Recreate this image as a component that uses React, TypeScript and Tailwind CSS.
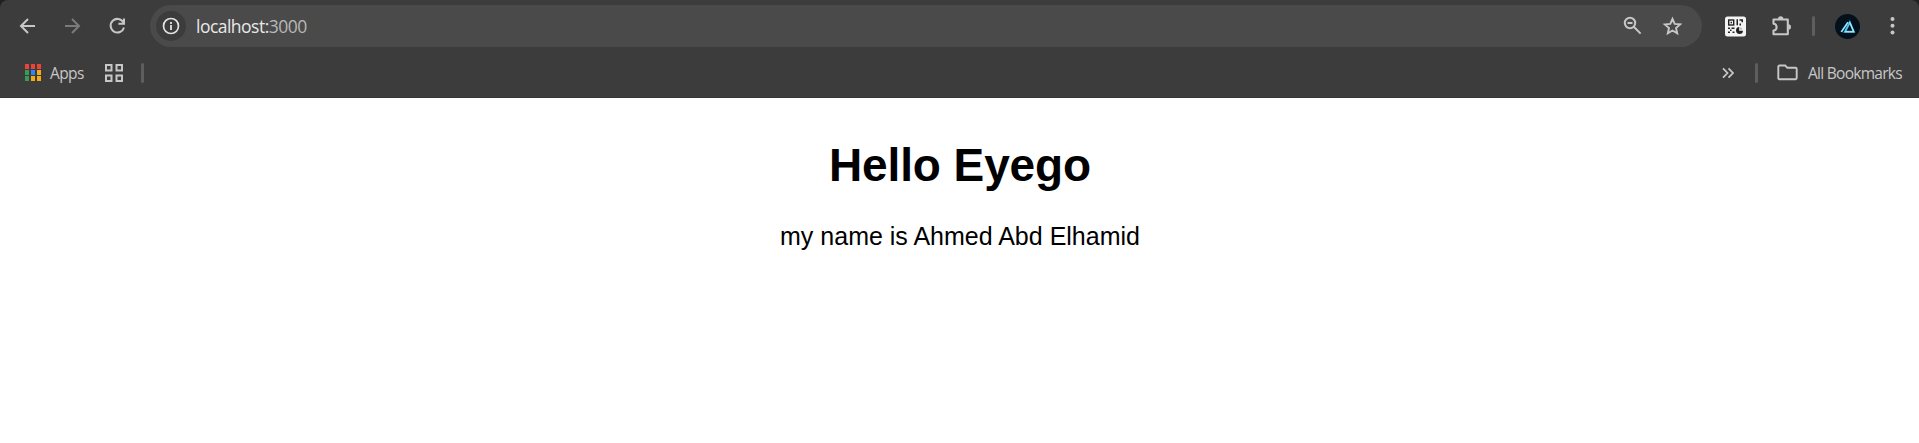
import type { ReactNode } from "react";

function Icon({ w, h, className = "", children }: { w: number; h: number; className?: string; children: ReactNode }) {
  return (
    <svg width={w} height={h} viewBox={`0 0 ${w} ${h}`} fill="none" className={`block shrink-0 ${className}`}>
      {children}
    </svg>
  );
}

function Divider({ className = "" }: { className?: string }) {
  return <div className={`h-5 w-[3px] shrink-0 rounded-full bg-[#5e5e5e] ${className}`} />;
}

function Toolbar() {
  return (
    <div className="flex h-[52px] items-center pl-[15px] text-[#c7c7c7]">
      <Icon w={25} h={25}>
        <path d="M20 12H6.5M13 5l-7 7 7 7" stroke="currentColor" strokeWidth="2" />
      </Icon>
      <Icon w={25} h={25} className="ml-5 text-[#7b7b7b]">
        <path d="M5 12h13.5M12 5l7 7-7 7" stroke="currentColor" strokeWidth="2" />
      </Icon>
      <Icon w={25} h={25} className="ml-5">
        <path d="M18.4 8.4A6.8 6.8 0 1 0 19 13.5" stroke="currentColor" strokeWidth="2" />
        <path d="M19 4.5v5.2h-5.6" stroke="currentColor" strokeWidth="2" />
      </Icon>

      <div className="ml-5 flex h-[42px] w-[1552px] items-center rounded-full bg-[#4a4a4a] pl-[6px]">
        <div className="flex size-[30px] items-center justify-center rounded-full bg-[#3c3c3c] text-[#e3e3e3]">
          <Icon w={18} h={18}>
            <circle cx="9" cy="9" r="7.5" stroke="currentColor" strokeWidth="1.7" />
            <path d="M9 8v5M9 5v2" stroke="currentColor" strokeWidth="1.8" />
          </Icon>
        </div>
        <div className="ml-[10px] pb-px font-['Open_Sans','Noto_Sans',sans-serif] text-[17.5px] leading-6 tracking-[-0.52px] text-[#e8e8e8]">
          localhost:<span className="text-[#b8b8b8]">3000</span>
        </div>
        <Icon w={20} h={20} className="ml-auto">
          <circle cx="7" cy="7" r="5.2" stroke="currentColor" strokeWidth="2" />
          <path d="M4.5 7h5M10.8 10.8l6.8 6.8" stroke="currentColor" strokeWidth="2" />
        </Icon>
        <Icon w={20} h={20} className="mr-5 ml-[19px]">
          <path
            d="M10.5 2.9l2.2 5 5.4.5-4.1 3.6 1.2 5.3-4.7-2.8-4.7 2.8L7 12 2.9 8.4l5.4-.5z"
            stroke="currentColor"
            strokeWidth="1.9"
          />
        </Icon>
      </div>

      <Icon w={21} h={21} className="ml-[23px]">
        <rect x="0" y="0.5" width="21" height="20" rx="2.5" fill="#f4f4f4" />
        <rect x="3.7" y="4" width="5" height="5" stroke="#222" strokeWidth="1.4" />
        <rect x="5.5" y="5.8" width="1.5" height="1.5" fill="#222" />
        <path
          d="M11.5 3.3H13v6h-1.5zM14.5 3.3H18v3h-1.5V4.7h-2zM14.5 7.5H16v2h-1.5zM3 11.5h2V13H3zM6.5 11.5h3V13h-3zM5 13.5h1.5V15H5zM3 15.5h2V17H3zM7.5 15.5h2V17h-2z"
          fill="#222"
        />
        <path d="M14.2 11a3.5 3.5 0 1 0 3.8 3.7h-3.8z" fill="#222" />
        <path d="M15.4 11.2l2 2.1h-2z" fill="#222" opacity="0.5" />
      </Icon>
      <Icon w={23} h={23} className="ml-6">
        <path
          d="M3.5 4.5h14.3v14.7H3.5v-3.6c2 0 3.1-1.5 3.1-3.4S5.5 8.7 3.5 8.7z"
          stroke="currentColor"
          strokeWidth="2.1"
          strokeLinejoin="round"
        />
        <path d="M8 4a2.7 2.7 0 0 1 5.4 0zM18.3 9.3a2.7 2.7 0 0 1 0 5.4z" fill="currentColor" />
      </Icon>
      <Divider className="ml-[19px]" />
      <Icon w={25} h={25} className="ml-5">
        <circle cx="12.5" cy="12.5" r="12.5" fill="#04111a" />
        <path d="M6.3 18L13 8.2" stroke="#4cc4ee" strokeWidth="2" />
        <path d="M10 17.8h8.8L14.8 8.4z" stroke="#4cc4ee" strokeWidth="2" />
        <path d="M6.3 18L13 8.2M10 17.8h8.8L14.8 8.4" stroke="#d4f8ff" strokeWidth="0.8" />
      </Icon>
      <Icon w={5} h={20} className="ml-[30px]">
        <circle cx="2.5" cy="3" r="2" fill="currentColor" />
        <circle cx="2.5" cy="9.7" r="2" fill="currentColor" />
        <circle cx="2.5" cy="16.5" r="2" fill="currentColor" />
      </Icon>
    </div>
  );
}

const appColors = [
  "bg-[#ee4238]", "bg-[#ee4238]", "bg-[#ee4238]",
  "bg-[#349c55]", "bg-[#2d86f3]", "bg-[#f5ab13]",
  "bg-[#349c55]", "bg-[#f5ab13]", "bg-[#f5ab13]",
];

function BookmarksBar() {
  return (
    <div className="flex h-[41px] items-center pr-[18px] pl-[25px] font-['Open_Sans','Noto_Sans',sans-serif] text-[15.5px] leading-5 text-[#c7c7c7]">
      <div className="grid grid-cols-[repeat(3,4px)] gap-x-[2px] gap-y-px">
        {appColors.map((color, i) => (
          <div key={i} className={`h-[5px] w-1 ${color}`} />
        ))}
      </div>
      <span className="ml-[9px] w-[34px] tracking-[-0.6px]">Apps</span>
      <Icon w={18} h={18} className="ml-[21px]">
        <path
          d="M1 1h5.5v5.5H1zM11.5 1H17v5.5h-5.5zM1 11.5h5.5V17H1zM11.5 11.5H17V17h-5.5z"
          stroke="currentColor"
          strokeWidth="2"
        />
      </Icon>
      <Divider className="ml-[18px]" />
      <Icon w={12} h={12} className="ml-auto">
        <path d="M1 1.3L5.5 6 1 10.7M6.5 1.3L11 6l-4.5 4.7" stroke="currentColor" strokeWidth="1.8" />
      </Icon>
      <Divider className="ml-[21px]" />
      <Icon w={21} h={17} className="ml-[19px]">
        <path
          d="M2.5 1.5h5.7l2.2 2.3h8.1q1.2 0 1.2 1.2v9q0 1.2-1.2 1.2h-16q-1.2 0-1.2-1.2V2.7q0-1.2 1.2-1.2z"
          stroke="currentColor"
          strokeWidth="1.9"
        />
      </Icon>
      <span className="ml-[10px] w-[93px] tracking-[-0.72px] whitespace-nowrap">All Bookmarks</span>
    </div>
  );
}

export default function App() {
  return (
    <div className="flex h-[443px] flex-col bg-white">
      <header className="h-[98px] shrink-0 bg-[#1f2020]">
        <div className="h-full rounded-t-[8px] border-b border-[#353334] bg-[#3c3c3c]">
          <Toolbar />
          <BookmarksBar />
        </div>
      </header>
      <main className="flex flex-col items-center pt-[39px] pl-px font-['Liberation_Sans',Arial,sans-serif] text-black">
        <h1 className="text-[46px] leading-[56px] font-bold tracking-[-0.1px]">Hello Eyego</h1>
        <p className="mt-[29px] text-[25px] leading-7">my name is Ahmed Abd Elhamid</p>
      </main>
    </div>
  );
}
